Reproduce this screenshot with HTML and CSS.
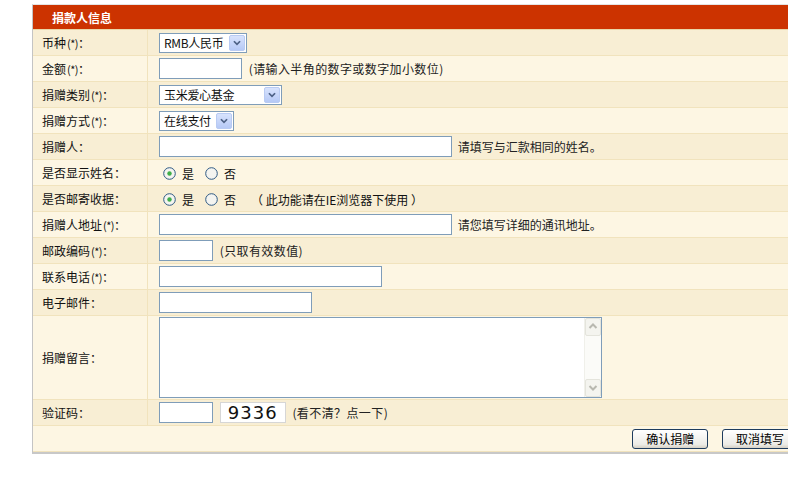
FILE: index.html
```html
<!DOCTYPE html>
<html lang="zh-CN">
<head>
    <meta charset="UTF-8">
    <title>捐款人信息</title>
    <link rel="stylesheet" href="styles.css">
</head>
<body>
    <div class="donate-box">
        <table class="donate-form">
            <tr class="donate-head">
                <td colspan="2">捐款人信息</td>
            </tr>
            <tr class="row-dark">
                <td class="label">币种<span class="star">(*)</span>：</td>
                <td class="field">
                    <span class="select sel-currency"><span class="sel-text">RMB人民币</span><span class="sel-btn"><svg width="16" height="16" viewBox="0 0 16 16"><path d="M4.5 6 L8 9.5 L11.5 6" fill="none" stroke="#4d6185" stroke-width="2"/></svg></span></span>
                </td>
            </tr>
            <tr class="row-light">
                <td class="label">金额<span class="star">(*)</span>：</td>
                <td class="field">
                    <input class="txt w-82" type="text">
                    <span class="hint hint-paren">(请输入半角的数字或数字加小数位)</span>
                </td>
            </tr>
            <tr class="row-dark">
                <td class="label">捐赠类别<span class="star">(*)</span>：</td>
                <td class="field">
                    <span class="select sel-type"><span class="sel-text">玉米爱心基金</span><span class="sel-btn"><svg width="16" height="16" viewBox="0 0 16 16"><path d="M4.5 6 L8 9.5 L11.5 6" fill="none" stroke="#4d6185" stroke-width="2"/></svg></span></span>
                </td>
            </tr>
            <tr class="row-light">
                <td class="label">捐赠方式<span class="star">(*)</span>：</td>
                <td class="field">
                    <span class="select sel-pay"><span class="sel-text">在线支付</span><span class="sel-btn"><svg width="16" height="16" viewBox="0 0 16 16"><path d="M4.5 6 L8 9.5 L11.5 6" fill="none" stroke="#4d6185" stroke-width="2"/></svg></span></span>
                </td>
            </tr>
            <tr class="row-dark">
                <td class="label">捐赠人：</td>
                <td class="field">
                    <input class="txt w-292" type="text">
                    <span class="hint">请填写与汇款相同的姓名。</span>
                </td>
            </tr>
            <tr class="row-light">
                <td class="label">是否显示姓名：</td>
                <td class="field">
                    <span class="radio"><svg width="13" height="13" viewBox="0 0 13 13"><circle cx="6.5" cy="6.5" r="5.8" fill="#f4f4f0" stroke="#2f5a84" stroke-width="1"/><circle cx="6.5" cy="6.5" r="2.2" fill="#3fae49"/></svg></span><span class="radio-text">是</span><span class="radio"><svg width="13" height="13" viewBox="0 0 13 13"><circle cx="6.5" cy="6.5" r="5.8" fill="#f4f4f0" stroke="#2f5a84" stroke-width="1"/></svg></span><span class="radio-text">否</span>
                </td>
            </tr>
            <tr class="row-dark">
                <td class="label">是否邮寄收据：</td>
                <td class="field">
                    <span class="radio"><svg width="13" height="13" viewBox="0 0 13 13"><circle cx="6.5" cy="6.5" r="5.8" fill="#f4f4f0" stroke="#2f5a84" stroke-width="1"/><circle cx="6.5" cy="6.5" r="2.2" fill="#3fae49"/></svg></span><span class="radio-text">是</span><span class="radio"><svg width="13" height="13" viewBox="0 0 13 13"><circle cx="6.5" cy="6.5" r="5.8" fill="#f4f4f0" stroke="#2f5a84" stroke-width="1"/></svg></span><span class="radio-text">否</span><span class="note">（ 此功能请在IE浏览器下使用 ）</span>
                </td>
            </tr>
            <tr class="row-light">
                <td class="label">捐赠人地址<span class="star">(*)</span>：</td>
                <td class="field">
                    <input class="txt w-292" type="text">
                    <span class="hint">请您填写详细的通讯地址。</span>
                </td>
            </tr>
            <tr class="row-dark">
                <td class="label">邮政编码<span class="star">(*)</span>：</td>
                <td class="field">
                    <input class="txt w-53" type="text">
                    <span class="hint hint-paren">(只取有效数值)</span>
                </td>
            </tr>
            <tr class="row-light">
                <td class="label">联系电话<span class="star">(*)</span>：</td>
                <td class="field">
                    <input class="txt w-222" type="text">
                </td>
            </tr>
            <tr class="row-dark">
                <td class="label">电子邮件：</td>
                <td class="field">
                    <input class="txt w-152" type="text">
                </td>
            </tr>
            <tr class="row-light row-message">
                <td class="label">捐赠留言：</td>
                <td class="field">
                    <div class="textarea">
                        <div class="textarea-body"></div>
                        <div class="scrollbar">
                            <span class="scroll-btn"><svg width="14" height="15" viewBox="0 0 14 15"><path d="M3.5 9 L7 5.5 L10.5 9" fill="none" stroke="#b8b8b0" stroke-width="2"/></svg></span>
                            <span class="scroll-btn"><svg width="14" height="15" viewBox="0 0 14 15"><path d="M3.5 6 L7 9.5 L10.5 6" fill="none" stroke="#b8b8b0" stroke-width="2"/></svg></span>
                        </div>
                    </div>
                </td>
            </tr>
            <tr class="row-dark">
                <td class="label">验证码：</td>
                <td class="field">
                    <input class="txt w-53" type="text">
                    <span class="captcha">9336</span>
                    <span class="hint hint-paren">(看不清？点一下)</span>
                </td>
            </tr>
            <tr class="row-light row-buttons">
                <td colspan="2">
                    <button class="btn" type="button">确认捐赠</button>
                    <button class="btn" type="button">取消填写</button>
                </td>
            </tr>
        </table>
    </div>
</body>
</html>
```

FILE: styles.css
```css
html, body {
    overflow: hidden;
}

body {
    margin: 0;
    background-color: #fff;
    font-family: "Noto Sans CJK SC", "Liberation Sans", sans-serif;
    font-size: 12px;
    color: #111;
}

.donate-box {
    margin: 4px 0 0 32px;
    width: 770px;
    border-left: 1px solid #c4c4c4;
    border-bottom: 2px solid #c8c8c8;
    border-top: 1px solid #e4e4e4;
}

.donate-form {
    width: 100%;
    border-collapse: collapse;
}

.donate-form td {
    padding: 0;
    height: 25px;
    border-bottom: 1px solid #f1e3bd;
    vertical-align: middle;
    white-space: nowrap;
}

.donate-head td {
    height: 24px;
    background-color: #cc3300;
    color: #fff;
    font-weight: bold;
    padding-left: 19px;
    border-bottom: 1px solid #e9d7a8;
}

.row-dark td {
    background-color: #f8eed4;
}

.row-light td {
    background-color: #fdf6e3;
}

.label {
    width: 105px;
    padding-left: 9px !important;
    border-right: 1px solid #f1e3bd;
}

.star {
    font-size: 11px;
    margin-left: 1px;
    letter-spacing: -0.5px;
}

.field {
    padding-left: 11px !important;
}

.txt {
    box-sizing: border-box;
    height: 21px;
    border: 1px solid #7f9db9;
    background: #fff;
    padding: 0 2px;
    vertical-align: middle;
    margin: 0;
}

.w-53 { width: 54px; }
.w-82 { width: 83px; }
.w-152 { width: 153px; }
.w-222 { width: 223px; }
.w-292 { width: 293px; }

.hint {
    margin-left: 3px;
    vertical-align: middle;
    color: #222;
}

.hint-paren {
    margin-left: 4px;
    letter-spacing: 0.4px;
}

.select {
    box-sizing: border-box;
    display: inline-flex;
    align-items: center;
    justify-content: space-between;
    height: 20px;
    border: 1px solid #7f9db9;
    background: #fff;
    vertical-align: middle;
    padding-left: 4px;
    padding-right: 1px;
}

.sel-currency { width: 88px; }
.sel-type { width: 123px; }
.sel-pay { width: 75px; }

.sel-text {
    font-size: 12px;
    letter-spacing: -0.3px;
}

.sel-btn {
    display: flex;
    width: 16px;
    height: 16px;
    border: 1px solid #b9cbf3;
    box-sizing: border-box;
    border-radius: 2px;
    background: linear-gradient(#d8e3fd, #b6c9f6);
    align-items: center;
    justify-content: center;
}

.sel-btn svg {
    display: block;
    width: 14px;
    height: 14px;
}

.radio {
    display: inline-block;
    vertical-align: middle;
    margin-left: 4px;
    height: 13px;
}

.radio svg {
    display: block;
}

.radio-text {
    vertical-align: middle;
    margin-left: 6px;
    margin-right: 7px;
}

.note {
    vertical-align: middle;
    margin-left: 8px;
}

.row-message td {
    height: 83px;
}

.textarea {
    display: flex;
    width: 443px;
    height: 81px;
    box-sizing: border-box;
    border: 1px solid #7f9db9;
    background: #fff;
}

.textarea-body {
    flex: 1;
}

.scrollbar {
    width: 16px;
    display: flex;
    flex-direction: column;
    justify-content: space-between;
    background: #fbfbf8;
    border-left: 1px solid #f0f0ea;
}

.scroll-btn {
    display: block;
    height: 16px;
    border: 1px solid #e4e4dc;
    border-radius: 2px;
    background: #f4f4ef;
}

.scroll-btn svg {
    display: block;
}

.captcha {
    display: inline-block;
    box-sizing: border-box;
    width: 66px;
    height: 21px;
    margin-left: 4px;
    border: 1px solid #d6d6d6;
    background: #fff;
    font-family: "DejaVu Sans", sans-serif;
    font-size: 18px;
    line-height: 19px;
    letter-spacing: 1px;
    text-align: center;
    color: #111;
    vertical-align: middle;
}

.row-buttons td {
    text-align: right;
    padding-right: 5px;
}

.btn {
    box-sizing: border-box;
    width: 76px;
    height: 20px;
    margin-left: 11px;
    padding: 0;
    border: 1px solid #1e3c5e;
    border-radius: 3px;
    background: linear-gradient(#ffffff, #ecebe6 80%, #d6d0c5);
    font-family: "Noto Sans CJK SC", sans-serif;
    font-size: 12px;
    color: #000;
    vertical-align: middle;
}
```
